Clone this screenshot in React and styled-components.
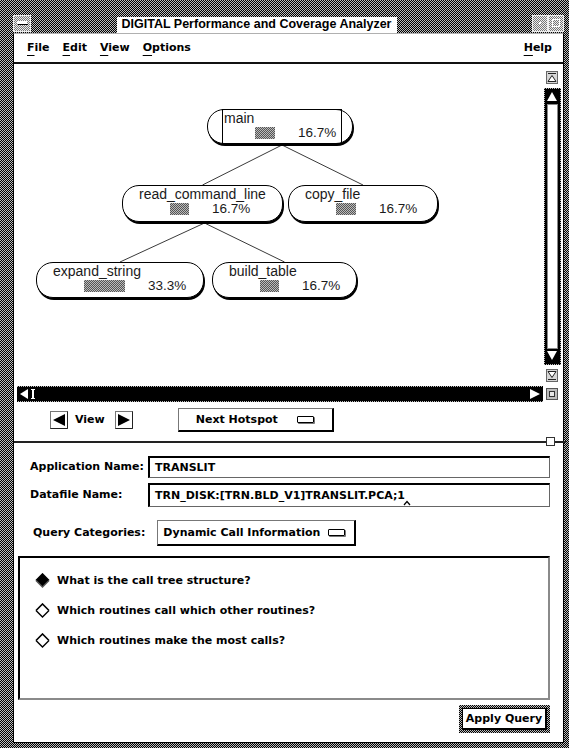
import React from "react";
import styled, { createGlobalStyle, css } from "styled-components";

const GlobalStyle = createGlobalStyle`
  html, body {
    margin: 0;
    padding: 0;
    background: #fff;
  }
  body {
    font-family: "DejaVu Sans", "Liberation Sans", sans-serif;
    color: #000;
  }
`;

// 1px checkerboard, the X11 "50% grey" stipple
const dither = css`
  background-color: #5e5e5e;
  background-image: repeating-conic-gradient(#000 0% 25%, #bcbcbc 0% 50%);
  background-size: 2px 2px;
`;

const lightDither = css`
  background-color: #b4b4b4;
  background-image: repeating-conic-gradient(#777 0% 25%, #eee 0% 50%);
  background-size: 2px 2px;
`;

const Frame = styled.div`
  ${dither}
  width: 569px;
  height: 748px;
  box-sizing: border-box;
  padding: 13px 5px 5px 13px;
  display: flex;
  flex-direction: column;
`;

const TitleBar = styled.div`
  height: 20px;
  display: grid;
  grid-template-columns: 18px 1fr 16px 16px;
  align-items: center;
`;

const WinButton = styled.div`
  ${lightDither}
  height: 17px;
  box-sizing: border-box;
  border: 1px solid #eee;
  display: flex;
  align-items: center;
  justify-content: center;
`;

const TitleText = styled.div`
  justify-self: center;
  align-self: end;
  margin-right: 50px;
  background: #fff;
  height: 16px;
  line-height: 16px;
  padding: 0 5px;
  font: bold 12.5px "Liberation Sans", Arial, sans-serif;
  white-space: nowrap;
`;

const Panel = styled.div`
  flex: 1;
  min-height: 0;
  display: flex;
  flex-direction: column;
  background: #fff;
  border: 1px solid #000;
  border-top-color: #b0b0b0;
`;

const MenuBar = styled.div`
  height: 29px;
  border-bottom: 2px solid #111;
  display: flex;
  align-items: center;
  gap: 13px;
  padding: 0 11px 0 13px;
`;

const MenuItem = styled.span`
  font-size: 11px;
  font-weight: bold;
  ${(p) =>
    p.$right &&
    css`
      margin-left: auto;
    `}
`;

const Mnemonic = styled.span`
  text-decoration: underline;
  text-underline-offset: 4px;
  text-decoration-thickness: 1px;
`;

const Canvas = styled.div`
  display: grid;
  grid-template-columns: 1fr 20px;
  grid-template-rows: 322px 16px;
`;

const TreeArea = styled.div`
  position: relative;
  overflow: hidden;
`;

const Edges = styled.svg`
  position: absolute;
  left: 0;
  top: 0;
`;

const Node = styled.div`
  position: absolute;
  box-sizing: border-box;
  border: 1px solid #000;
  border-radius: 17px;
  box-shadow: 1px 2px 0 #000;
  background: #fff;
  padding: 1px 0 0 16px;
  font: 14px "Liberation Sans", Arial, sans-serif;
  color: #1a1a1a;
  ${(p) =>
    p.$selected &&
    css`
      &::before {
        content: "";
        position: absolute;
        left: 14px;
        right: 10px;
        top: -1px;
        bottom: -1px;
        border: 1px solid #000;
      }
    `}
`;

const NodeName = styled.div`
  height: 16px;
  line-height: 14px;
  white-space: nowrap;
`;

const BarRow = styled.div`
  display: flex;
  align-items: flex-end;
  gap: 23px;
  padding-left: 31px;
  height: 12px;
`;

const Bar = styled.div`
  height: 12px;
  background-color: #8a8a8a;
  background-image: repeating-conic-gradient(#555 0% 25%, #bbb 0% 50%);
  background-size: 2px 2px;
`;

const Pct = styled.span`
  line-height: 12px;
  font-size: 13.5px;
`;

const VColumn = styled.div`
  display: flex;
  flex-direction: column;
  align-items: center;
  padding: 7px 2px 0 0;
  gap: 4px;
`;

const VTrack = styled.div`
  ${dither}
  width: 17px;
  height: 277px;
  box-sizing: border-box;
  padding: 1px;
  display: flex;
`;

const TrackInner = styled.div`
  flex: 1;
  background: #000;
  display: flex;
  flex-direction: ${(p) => (p.$horizontal ? "row" : "column")};
  align-items: center;
  justify-content: space-between;
  padding: ${(p) => (p.$horizontal ? "0 2px" : "2px 0")};
`;

const Slider = styled.div`
  flex: 1;
  align-self: stretch;
  margin: 1px 2px;
  background: #fff;
  border: 1px solid #888;
`;

const HTrack = styled.div`
  ${dither}
  margin-left: 3px;
  padding: 1px 0;
  display: flex;
`;

const CornerCell = styled.div`
  display: flex;
  align-items: center;
  justify-content: center;
  padding-right: 2px;
`;

const ViewRow = styled.div`
  height: 38px;
  display: flex;
  align-items: center;
  padding: 0 0 3px 36px;
`;

const Label = styled.span`
  font-size: 11px;
  font-weight: bold;
  white-space: nowrap;
`;

const ViewLabel = styled(Label)`
  margin: 0 10px 0 7px;
`;

const PushButton = styled.div`
  margin-left: 45px;
  width: 156px;
  height: 24px;
  box-sizing: border-box;
  border: 1px solid #777;
  border-right: 2px solid #000;
  border-bottom: 2px solid #000;
  display: flex;
  align-items: center;
  justify-content: space-between;
  padding: 0 18px 0 17px;
`;

const OptionIcon = styled.span`
  width: 15px;
  height: 5px;
  border: 1px solid #000;
  border-radius: 1px;
  box-shadow: 1px 1px 0 #777;
`;

const Separator = styled.div`
  position: relative;
  height: 2px;
  background: #222;
  margin-right: -3px;
`;

const Sash = styled.div`
  position: absolute;
  right: 11px;
  top: -4px;
  width: 9px;
  height: 9px;
  box-sizing: border-box;
  background: #fff;
  border: 1px solid #333;
`;

const Form = styled.div`
  flex: 1;
  display: flex;
  flex-direction: column;
  padding: 13px 13px 9px 4px;
`;

const FieldGrid = styled.div`
  margin-left: 12px;
  display: grid;
  grid-template-columns: 118px 1fr;
  grid-template-rows: 22px 24px;
  row-gap: 5px;
  align-items: center;
`;

const TextBox = styled.div`
  height: 100%;
  box-sizing: border-box;
  border: 1px solid #000;
  border-top-width: 2px;
  border-left-width: 2px;
  border-right-color: #666;
  border-bottom-color: #666;
  display: flex;
  align-items: center;
  padding: 1px 0 0 5px;
  font-size: 11px;
  font-weight: bold;
  white-space: nowrap;
`;

const Caret = styled.svg`
  align-self: flex-end;
  margin: 0 0 0 -2px;
`;

const QueryRow = styled.div`
  margin-top: 13px;
  padding-left: 15px;
  display: flex;
  align-items: center;
  gap: 12px;
`;

const OptionMenu = styled.div`
  width: 199px;
  height: 26px;
  box-sizing: border-box;
  border: 1px solid #777;
  border-right: 2px solid #000;
  border-bottom: 2px solid #000;
  display: flex;
  align-items: center;
  justify-content: space-between;
  padding: 0 9px 0 5px;
`;

const ListBox = styled.div`
  margin-top: 10px;
  height: 144px;
  box-sizing: border-box;
  border: 2px solid #000;
  border-right-color: #8a8a8a;
  border-bottom-color: #8a8a8a;
  display: flex;
  flex-direction: column;
  gap: 14px;
  padding: 15px 0 0 15px;
`;

const Choice = styled.div`
  display: flex;
  align-items: center;
  gap: 7px;
  height: 16px;
`;

const ApplyOuter = styled.div`
  ${dither}
  align-self: flex-end;
  margin-top: 5px;
  width: 91px;
  height: 28px;
  box-sizing: border-box;
  padding: 3px;
  display: flex;
`;

const ApplyButton = styled.div`
  flex: 1;
  background: #fff;
  border: 1px solid #000;
  border-right-width: 2px;
  border-bottom-width: 2px;
  display: flex;
  align-items: center;
  justify-content: center;
  font-size: 11px;
  font-weight: bold;
`;

const nodes = [
  { id: "main", name: "main", pct: "16.7%", bar: 20, x: 193, y: 45, w: 146, h: 35, selected: true },
  { id: "rcl", name: "read_command_line", pct: "16.7%", bar: 19, x: 108, y: 121, w: 161, h: 37 },
  { id: "copy", name: "copy_file", pct: "16.7%", bar: 20, x: 274, y: 121, w: 150, h: 37 },
  { id: "exp", name: "expand_string", pct: "33.3%", bar: 41, x: 22, y: 198, w: 168, h: 36 },
  { id: "build", name: "build_table", pct: "16.7%", bar: 19, x: 198, y: 198, w: 145, h: 36 },
];

const edges = [
  ["main", "rcl"],
  ["main", "copy"],
  ["rcl", "exp"],
  ["rcl", "build"],
];

const byId = Object.fromEntries(nodes.map((n) => [n.id, n]));

const Diamond = ({ on }) => (
  <svg width="15" height="15" viewBox="0 0 15 15">
    <polygon points="7.5,1 14,7.5 7.5,14 1,7.5" fill={on ? "#000" : "#fff"} />
    <polyline points="1,7.5 7.5,1 14,7.5" fill="none" stroke="#000" strokeWidth="1.6" />
    <polyline points="1,7.5 7.5,14 14,7.5" fill="none" stroke={on ? "#555" : "#000"} strokeWidth="1.4" />
  </svg>
);

const ArrowBox = ({ dir }) => (
  <svg width="18" height="18" viewBox="0 0 18 18">
    <rect x="0.5" y="0.5" width="17" height="17" fill="#fff" stroke="#777" />
    <path d="M17.5 0.5 V17.5 H0.5" fill="none" stroke="#222" />
    {dir === "left" ? (
      <polygon points="15,3 3,9 15,15" fill="#000" />
    ) : (
      <polygon points="3,3 15,9 3,15" fill="#000" />
    )}
  </svg>
);

const PageIcon = ({ dir }) => (
  <svg width="12" height="13" viewBox="0 0 12 13">
    <rect x="0.5" y="0.5" width="11" height="12" fill="#d6d6d6" stroke="#666" />
    {dir === "up" ? (
      <>
        <line x1="2" y1="2.5" x2="10" y2="2.5" stroke="#222" />
        <polygon points="2,10.5 6,4.5 10,10.5" fill="#fff" stroke="#222" />
      </>
    ) : (
      <>
        <line x1="2" y1="10.5" x2="10" y2="10.5" stroke="#222" />
        <polygon points="2,2.5 6,8.5 10,2.5" fill="#fff" stroke="#222" />
      </>
    )}
  </svg>
);

const Tri = ({ dir }) => {
  const pts = {
    up: "1,10 6,1 11,10",
    down: "1,1 6,10 11,1",
    left: "10,1 1,6 10,11",
    right: "1,1 11,6 1,11",
  }[dir];
  return (
    <svg width="12" height="12" viewBox="0 0 12 12">
      <polygon points={pts} fill="#fff" />
    </svg>
  );
};

const TreeNode = ({ n }) => (
  <Node
    $selected={n.selected}
    style={{ left: n.x, top: n.y, width: n.w, height: n.h }}
  >
    <NodeName>{n.name}</NodeName>
    <BarRow>
      <Bar style={{ width: n.bar }} />
      <Pct>{n.pct}</Pct>
    </BarRow>
  </Node>
);

const App = () => {
  return (
    <>
      <GlobalStyle />
      <Frame>
        <TitleBar>
          <WinButton>
            <svg width="11" height="5" viewBox="0 0 11 5">
              <rect x="0" y="0" width="10" height="3" fill="#fff" />
              <rect x="1" y="3" width="10" height="1" fill="#000" />
            </svg>
          </WinButton>
          <TitleText>DIGITAL Performance and Coverage Analyzer</TitleText>
          <WinButton>
            <svg width="4" height="4" viewBox="0 0 4 4">
              <rect x="1" y="1" width="2" height="2" fill="#fff" />
            </svg>
          </WinButton>
          <WinButton>
            <svg width="10" height="10" viewBox="0 0 10 10">
              <rect x="1.5" y="1.5" width="7" height="7" fill="none" stroke="#fff" />
            </svg>
          </WinButton>
        </TitleBar>
        <Panel>
          <MenuBar>
            <MenuItem><Mnemonic>F</Mnemonic>ile</MenuItem>
            <MenuItem><Mnemonic>E</Mnemonic>dit</MenuItem>
            <MenuItem><Mnemonic>V</Mnemonic>iew</MenuItem>
            <MenuItem><Mnemonic>O</Mnemonic>ptions</MenuItem>
            <MenuItem $right><Mnemonic>H</Mnemonic>elp</MenuItem>
          </MenuBar>

          <Canvas>
            <TreeArea>
              <Edges width="529" height="322">
                {edges.map(([a, b]) => {
                  const p = byId[a];
                  const c = byId[b];
                  return (
                    <line
                      key={a + b}
                      x1={p.x + p.w / 2 + 2}
                      y1={p.y + p.h + 1}
                      x2={c.x + c.w / 2}
                      y2={c.y}
                      stroke="#3a3a3a"
                      strokeWidth="1"
                    />
                  );
                })}
              </Edges>
              {nodes.map((n) => (
                <TreeNode key={n.id} n={n} />
              ))}
            </TreeArea>
            <VColumn>
              <PageIcon dir="up" />
              <VTrack>
                <TrackInner>
                  <Tri dir="up" />
                  <Slider />
                  <Tri dir="down" />
                </TrackInner>
              </VTrack>
              <PageIcon dir="down" />
            </VColumn>
            <HTrack>
              <TrackInner $horizontal>
                <svg width="20" height="12" viewBox="0 0 20 12">
                  <polygon points="9,1 1,6 9,11" fill="#fff" />
                  <path d="M12 1 H16 V2 H15 V10 H16 V11 H12 V10 H13 V2 H12 Z" fill="#fff" />
                </svg>
                <Tri dir="right" />
              </TrackInner>
            </HTrack>
            <CornerCell>
              <svg width="12" height="12" viewBox="0 0 12 12">
                <rect x="0.5" y="0.5" width="11" height="11" fill="#bdbdbd" stroke="#555" />
                <rect x="3.5" y="3.5" width="5" height="5" fill="#e8e8e8" stroke="#333" />
              </svg>
            </CornerCell>
          </Canvas>

          <ViewRow>
            <ArrowBox dir="left" />
            <ViewLabel>View</ViewLabel>
            <ArrowBox dir="right" />
            <PushButton>
              <Label>Next Hotspot</Label>
              <OptionIcon />
            </PushButton>
          </ViewRow>

          <Separator>
            <Sash />
          </Separator>

          <Form>
            <FieldGrid>
              <Label>Application Name:</Label>
              <TextBox>TRANSLIT</TextBox>
              <Label>Datafile Name:</Label>
              <TextBox>
                TRN_DISK:[TRN.BLD_V1]TRANSLIT.PCA;1
                <Caret width="8" height="6" viewBox="0 0 8 6">
                  <polyline points="1,5 4,1.5 7,5" fill="none" stroke="#000" strokeWidth="1.2" />
                </Caret>
              </TextBox>
            </FieldGrid>

            <QueryRow>
              <Label>Query Categories:</Label>
              <OptionMenu>
                <Label>Dynamic Call Information</Label>
                <OptionIcon />
              </OptionMenu>
            </QueryRow>

            <ListBox>
              <Choice>
                <Diamond on />
                <Label>What is the call tree structure?</Label>
              </Choice>
              <Choice>
                <Diamond />
                <Label>Which routines call which other routines?</Label>
              </Choice>
              <Choice>
                <Diamond />
                <Label>Which routines make the most calls?</Label>
              </Choice>
            </ListBox>

            <ApplyOuter>
              <ApplyButton>Apply Query</ApplyButton>
            </ApplyOuter>
          </Form>
        </Panel>
      </Frame>
    </>
  );
};

export default App;
